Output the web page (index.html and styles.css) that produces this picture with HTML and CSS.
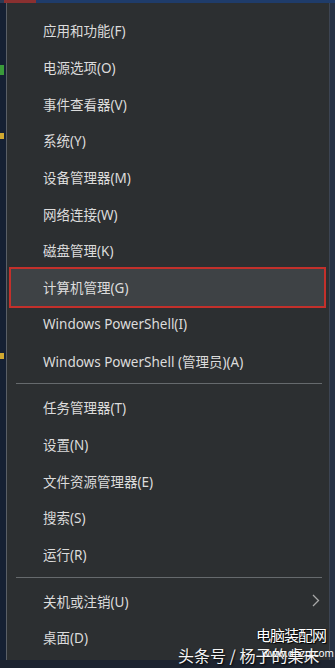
FILE: index.html
```html
<!DOCTYPE html>
<html lang="zh">
<head>
<meta charset="utf-8">
<link rel="stylesheet" href="styles.css">
</head>
<body>
<div class="desktop">
  <div class="topbar"><span class="tb-red"></span><span class="tb-blue"></span></div>
  <div class="middle">
    <div class="leftstrip">
      <span class="bit bit-green"></span>
      <span class="bit bit-yellow"></span>
      <span class="bit bit-yellow2"></span>
    </div>
    <div class="menu">
      <div class="item">应用和功能(F)</div>
      <div class="item">电源选项(O)</div>
      <div class="item">事件查看器(V)</div>
      <div class="item">系统(Y)</div>
      <div class="item">设备管理器(M)</div>
      <div class="item">网络连接(W)</div>
      <div class="item">磁盘管理(K)</div>
      <div class="item highlight">计算机管理(G)</div>
      <div class="item">Windows PowerShell(I)</div>
      <div class="item">Windows PowerShell (管理员)(A)</div>
      <div class="sep"></div>
      <div class="item">任务管理器(T)</div>
      <div class="item">设置(N)</div>
      <div class="item">文件资源管理器(E)</div>
      <div class="item">搜索(S)</div>
      <div class="item">运行(R)</div>
      <div class="sep"></div>
      <div class="item has-sub">关机或注销(U)
        <svg class="chev" width="8" height="13" viewBox="0 0 8 13"><path d="M1 1 L6.5 6.5 L1 12" fill="none" stroke="#a8a8a8" stroke-width="1.3"/></svg>
      </div>
      <div class="item">桌面(D)</div>
    </div>
    <div class="rightstrip"></div>
  </div>
  <div class="bottombar"></div>
  <div class="wm-site">电脑装配网</div>
  <div class="wm-author">头条号 / 杨子的桌未</div>
  <div class="wm-url">www.dnzp.com</div>
</div>
</body>
</html>
```
FILE: styles.css
```css
html, body {
  margin: 0;
  padding: 0;
  background: #1a2233;
}
.desktop {
  position: relative;
  width: 335px;
  height: 668px;
  overflow: hidden;
  background: #1a2233;
  font-family: "Noto Sans", "Noto Sans CJK SC", sans-serif;
}
.topbar {
  height: 3px;
  display: flex;
  background: #2a3a55;
}
.tb-red { width: 32px; background: #8a3030; margin-left: 4px; }
.tb-blue { flex: 1; background: #1f3c6a; }
.middle {
  display: flex;
  height: 657px;
}
.leftstrip {
  width: 6px;
  background: #152033;
  position: relative;
}
.bit { position: absolute; left: 0; width: 4px; }
.bit-green { top: 62px; height: 10px; background: #3a9a3a; }
.bit-yellow { top: 130px; height: 6px; background: #d0a830; }
.bit-yellow2 { top: 350px; height: 6px; background: #d0a830; }
.menu {
  width: 323px;
  background: #2c2f31;
  border-left: 1px solid #5a5f66;
  box-sizing: border-box;
  padding: 9px 0 4px;
  display: flex;
  flex-direction: column;
}
.rightstrip {
  flex: 1;
  background: #263245;
  border-left: 1px solid #3c4452;
}
.item {
  height: 36.7px;
  display: flex;
  align-items: center;
  padding-left: 36px;
  color: #dcdcdc;
  font-size: 13.5px;
  box-sizing: border-box;
  position: relative;
  margin: 0 3px 0 0;
}
.item.highlight {
  margin: 0 5px 0 4px;
  padding-left: 32px;
  background: #3e4245;
  outline: 2.5px solid #c3302b;
  outline-offset: 0.5px;
}
.chev {
  position: absolute;
  right: 6px;
  top: 12px;
}
.sep {
  height: 10px;
  display: flex;
  align-items: center;
  padding: 0 7px 0 9px;
}
.sep::before {
  content: "";
  flex: 1;
  height: 1px;
  background: #666a6d;
}
.bottombar {
  height: 8px;
  background: #1d2430;
}
.wm-site {
  position: absolute;
  left: 256px;
  top: 626px;
  font-size: 15px;
  line-height: 18px;
  color: #ffffff;
  font-family: "Noto Sans CJK SC", sans-serif;
  text-shadow: 0 0 1px #000, 1px 1px 1px #000;
  letter-spacing: -1px;
}
.wm-url {
  position: absolute;
  left: 262px;
  top: 647px;
  font-size: 10px;
  line-height: 12px;
  color: #ffffff;
  font-family: "Noto Sans", sans-serif;
}
.wm-author {
  position: absolute;
  left: 178px;
  top: 645px;
  font-size: 16px;
  line-height: 20px;
  color: #f4f4f4;
  font-family: "Noto Sans CJK SC", sans-serif;
  text-shadow: 1px 1px 2px #000;
}
```
